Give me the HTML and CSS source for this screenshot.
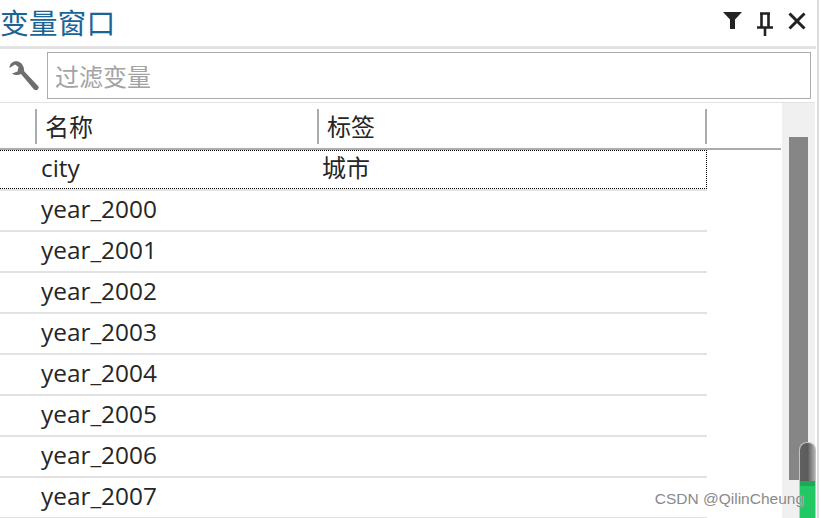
FILE: index.html
```html
<!DOCTYPE html>
<html lang="zh-CN">
<head>
<meta charset="UTF-8">
<title>变量窗口</title>
<link rel="stylesheet" href="styles.css">
</head>
<body>
<div class="window">
    <div class="title-bar">
        <div class="title">变量窗口</div>
        <div class="title-icons">
            <svg class="icon" width="19" height="17" viewBox="0 0 19 17"><path d="M0 0H19L12 7.5V17H7V7.5Z" fill="#222"/></svg>
            <svg class="icon" width="16" height="24" viewBox="0 0 16 24"><path d="M3 1.5H13M4.5 1.5V15M11.5 1.5V15M0 15.5H16M8 16V24" fill="none" stroke="#222" stroke-width="2.6"/></svg>
            <svg class="icon" width="18" height="18" viewBox="0 0 18 18"><path d="M1.5 1.5L16.5 16.5M16.5 1.5L1.5 16.5" fill="none" stroke="#222" stroke-width="3"/></svg>
        </div>
    </div>
    <div class="filter-bar">
        <svg class="wrench" width="30" height="30" viewBox="0 0 30 30"><path d="M9 .5C5 -.5 .5 2 .5 7L6 3.5 9.5 6 8.5 10.5 3 12.5C6 14.5 9.5 14.5 12 13L25 28.5C27 30.5 30.5 28.5 29.5 25.5L15 10C15.5 6 13 1.5 9 .5Z" fill="#6e6e6e"/></svg>
        <div class="filter-input">过滤变量</div>
    </div>
    <div class="body">
        <div class="table">
            <div class="table-head">
                <div class="head-cell name-col">名称</div>
                <div class="head-cell label-col">标签</div>
            </div>
            <div class="row row-selected"><div class="cell-name">city</div><div class="cell-label">城市</div></div>
            <div class="row"><div class="cell-name">year_2000</div></div>
            <div class="row"><div class="cell-name">year_2001</div></div>
            <div class="row"><div class="cell-name">year_2002</div></div>
            <div class="row"><div class="cell-name">year_2003</div></div>
            <div class="row"><div class="cell-name">year_2004</div></div>
            <div class="row"><div class="cell-name">year_2005</div></div>
            <div class="row"><div class="cell-name">year_2006</div></div>
            <div class="row"><div class="cell-name">year_2007</div></div>
        </div>
        <div class="scrollbar"><div class="thumb"></div></div>
    </div>
    <div class="level-meter"><div class="level-fill"></div></div>
    <div class="watermark">CSDN @QilinCheung</div>
</div>
</body>
</html>
```

FILE: styles.css
```css
body {
    margin: 0;
    padding: 0;
    background: #fff;
    overflow: hidden;
    font-family: "Open Sans", "Noto Sans CJK SC", sans-serif;
    color: #262626;
}

.window {
    position: relative;
    width: 821px;
    height: 518px;
    overflow: hidden;
    box-sizing: border-box;
    padding-right: 6px;
}

.window::after {
    content: "";
    position: absolute;
    top: 0;
    right: 2px;
    width: 2px;
    height: 518px;
    background: #dcdcdc;
}

.title-bar {
    display: flex;
    justify-content: space-between;
    height: 46px;
    margin-right: -1px;
    border-bottom: 3px solid #e2e2e2;
}

.title {
    font-family: "Noto Sans CJK SC", sans-serif;
    font-size: 28.8px;
    line-height: 44px;
    color: #1a6496;
}

.title-icons {
    display: flex;
    align-items: flex-start;
    gap: 15px;
    padding: 12px 10px 0 0;
}

.filter-bar {
    display: flex;
    align-items: center;
    gap: 8px;
    height: 54px;
    padding: 0 4px 0 9px;
    border-bottom: 1px solid #e2e2e2;
    box-sizing: border-box;
}

.wrench {
    flex: none;
}

.filter-input {
    flex: 1;
    height: 47px;
    box-sizing: border-box;
    border: 1px solid #ababab;
    padding-left: 7px;
    font-family: "Noto Sans CJK SC", sans-serif;
    font-size: 24px;
    line-height: 45px;
    color: #a3a3a3;
}

.body {
    display: flex;
    height: 415px;
}

.table {
    width: 782px;
    flex: none;
}

.table-head {
    display: flex;
    height: 47px;
    padding-top: 6px;
    box-sizing: border-box;
    border-bottom: 2px solid #ababab;
    margin-right: 1px;
}

.head-cell {
    height: 35px;
    border-left: 2px solid #ababab;
    padding-left: 8px;
    box-sizing: border-box;
    font-family: "Noto Sans CJK SC", sans-serif;
    font-size: 24px;
    line-height: 34px;
}

.name-col {
    margin-left: 35px;
    width: 282px;
}

.label-col {
    width: 390px;
    border-right: 2px solid #ababab;
}

.row {
    display: flex;
    width: 707px;
    height: 41px;
    box-sizing: border-box;
    border-bottom: 2px solid #e2e2e2;
    font-size: 24.4px;
    line-height: 36px;
}

.row-selected {
    height: 39px;
    margin-bottom: 2px;
    border: 1px dotted #000;
    border-left: 0;
    box-shadow: 0 2px 0 #e2e2e2;
    line-height: 34px;
}

.cell-name {
    width: 282px;
    padding-left: 41px;
    box-sizing: border-box;
    flex: none;
}

.cell-label {
    padding-left: 40px;
    font-family: "Noto Sans CJK SC", sans-serif;
    font-size: 24px;
    line-height: 32px;
}

.scrollbar {
    width: 33px;
    flex: none;
    background: #f0f0f0;
    padding: 34px 7px 0 7px;
    box-sizing: border-box;
}

.thumb {
    width: 19px;
    height: 343px;
    background: #868686;
}

.level-meter {
    position: absolute;
    left: 799px;
    top: 442px;
    width: 17px;
    height: 76px;
    box-sizing: border-box;
    border: 1px solid #c4c4c4;
    border-bottom: 0;
    border-radius: 8px 8px 0 0;
    background: linear-gradient(to right, #606060 0, #5c5c5c 50%, #b0b0b0 100%);
    overflow: hidden;
}

.level-fill {
    margin-top: 38px;
    height: 38px;
    background: linear-gradient(to bottom, #1fa855 0, #1fa855 5px, #22c863 5px);
}

.watermark {
    position: absolute;
    right: 17px;
    top: 490px;
    font-family: "Liberation Sans", sans-serif;
    font-size: 15.5px;
    line-height: 18px;
    color: #8a8a8a;
    text-shadow: 0 0 1px #fff;
}
```
